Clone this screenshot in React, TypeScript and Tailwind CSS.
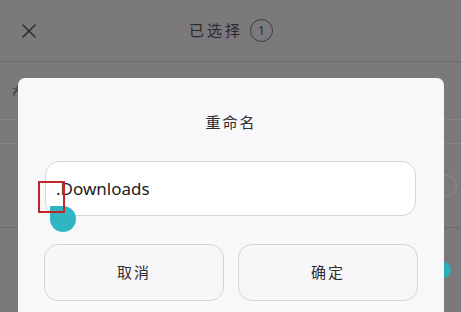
import { X } from "lucide-react";

export default function App() {
  return (
    <div
      className="relative w-[461px] h-[312px] overflow-hidden bg-[#7b797c]"
      style={{ fontFamily: '"Noto Sans", "Noto Sans CJK SC", sans-serif' }}
    >
      {/* background page */}
      <div className="flex h-[62px] items-center border-b border-[#6a686b] px-[17px]">
        <X className="h-[24px] w-[24px] text-[#2f2e30]" strokeWidth={1.6} />
        <div className="ml-[148px] flex items-center gap-[7px] text-[15px] text-[#2a292b]">
          <span className="tracking-[3px]">已选择</span>
          <span className="flex h-[23px] w-[23px] items-center justify-center rounded-full border border-[#3a393b] text-[12px]">
            1
          </span>
        </div>
      </div>
      <div className="flex h-[58px] items-center border-b border-[#868487] px-[12px] text-[13px] text-[#3a393b]">
        <span>≯</span>
      </div>
      <div className="h-[24px] border-b border-[#868487]" />
      <div className="flex h-[84px] items-center justify-end border-b border-[#6c6a6d] pr-[4px]">
        <div className="h-[22px] w-[22px] rounded-full border border-[#8c8a8d]" />
      </div>
      <div className="flex h-[84px] items-center justify-end pr-[10px]">
        <div className="h-[16px] w-[16px] rounded-full bg-[#2aaeb9]" />
      </div>

      {/* rename dialog */}
      <div className="absolute left-[18px] top-[78px] h-[260px] w-[426px] rounded-[7px] bg-[#f8f7fa] px-[26px]">
        <div className="pt-[33px] text-center text-[15px] leading-[22px] tracking-[2px] text-[#2d2c2e]">
          重命名
        </div>
        <div className="relative mt-[28px] ml-[1px] flex h-[55px] w-[371px] items-center rounded-[14px] border border-[#d6d5d8] bg-white pl-[10px]">
          <span className="text-[17px] text-[#1c1c1c]">.Downloads</span>
          <svg
            className="absolute left-[4px] top-[39px]"
            width="28"
            height="32"
            viewBox="0 0 28 32"
          >
            <path d="M0 5 L13 5 A13 13 0 1 1 0 18 Z" fill="#30b6c2" />
          </svg>
          <div className="absolute left-[-8px] top-[19px] h-[32px] w-[27px] border-2 border-[#c0262c]" />
        </div>
        <div className="mt-[28px] flex gap-[14px]">
          <button className="flex h-[57px] w-[180px] items-center justify-center rounded-[14px] border border-[#d4d3d6] bg-[#f7f6f9] text-[15px] tracking-[2px] text-[#2d2c2e]">
            取消
          </button>
          <button className="flex h-[57px] w-[180px] items-center justify-center rounded-[14px] border border-[#d4d3d6] bg-[#f7f6f9] text-[15px] tracking-[2px] text-[#2d2c2e]">
            确定
          </button>
        </div>
      </div>
    </div>
  );
}
